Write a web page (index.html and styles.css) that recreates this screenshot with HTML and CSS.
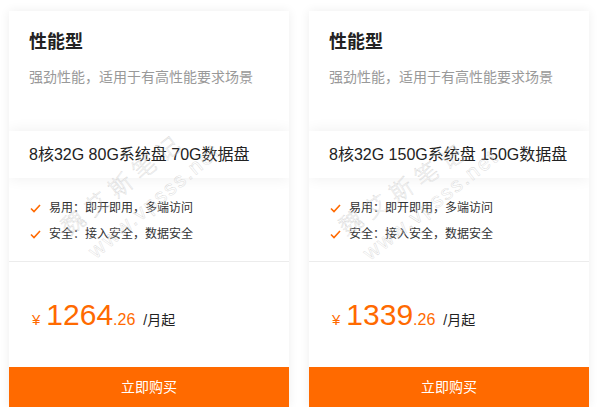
FILE: index.html
```html
<!DOCTYPE html>
<html lang="zh-CN">
<head>
<meta charset="utf-8">
<title>性能型</title>
<link rel="stylesheet" href="styles.css">
</head>
<body>
<div class="plans">
  <div class="card">
    <div class="head">
      <h3 class="title">性能型</h3>
      <p class="desc">强劲性能，适用于有高性能要求场景</p>
    </div>
    <div class="spec">8核32G 80G系统盘 70G数据盘</div>
    <ul class="features">
      <li><svg class="check" viewBox="0 0 11 9"><polyline points="1,4.5 4,7.5 10,1" /></svg>易用：即开即用，多端访问</li>
      <li><svg class="check" viewBox="0 0 11 9"><polyline points="1,4.5 4,7.5 10,1" /></svg>安全：接入安全，数据安全</li>
    </ul>
    <div class="price"><span class="yen">¥</span><span class="int">1264</span><span class="dec">.26</span><span class="unit">/月起</span></div>
    <a class="buy">立即购买</a>
    <div class="wm wm1"><span class="wm-cn">魏艾斯笔记</span><span class="wm-en">www.vpsss.net</span></div>
  </div>
  <div class="card">
    <div class="head">
      <h3 class="title">性能型</h3>
      <p class="desc">强劲性能，适用于有高性能要求场景</p>
    </div>
    <div class="spec">8核32G 150G系统盘 150G数据盘</div>
    <ul class="features">
      <li><svg class="check" viewBox="0 0 11 9"><polyline points="1,4.5 4,7.5 10,1" /></svg>易用：即开即用，多端访问</li>
      <li><svg class="check" viewBox="0 0 11 9"><polyline points="1,4.5 4,7.5 10,1" /></svg>安全：接入安全，数据安全</li>
    </ul>
    <div class="price"><span class="yen">¥</span><span class="int">1339</span><span class="dec">.26</span><span class="unit">/月起</span></div>
    <a class="buy">立即购买</a>
    <div class="wm wm2"><span class="wm-cn">魏艾斯笔记</span><span class="wm-en">www.vpsss.net</span></div>
  </div>
</div>
</body>
</html>
```

FILE: styles.css
```css
* { box-sizing: border-box; }
html, body {
  margin: 0;
  padding: 0;
  background: #fff;
}
body {
  font-family: "Liberation Sans", "Noto Sans CJK SC", sans-serif;
  color: #333;
}
.plans {
  display: flex;
  gap: 20px;
  padding: 11px 9px 0;
}
.card {
  position: relative;
  width: 280px;
  height: 396px;
  background: #fff;
  box-shadow: 0 0 10px rgba(0, 0, 0, 0.07);
  display: flex;
  flex-direction: column;
  overflow: hidden;
}
.head {
  padding: 19px 20px 0;
  height: 120px;
}
.title {
  margin: 0;
  font-size: 18px;
  line-height: 24px;
  font-weight: bold;
  color: #222;
}
.desc {
  margin: 13px 0 0;
  font-size: 14px;
  line-height: 20px;
  color: #999;
}
.spec {
  height: 47px;
  line-height: 47px;
  padding-left: 20px;
  font-size: 16px;
  color: #222;
  background: #fff;
  box-shadow: 0 0 14px rgba(0, 0, 0, 0.07);
  position: relative;
  z-index: 1;
}
.features {
  list-style: none;
  margin: 0;
  padding: 17px 20px 14px 21px;
  border-bottom: 1px solid #ececec;
}
.features li {
  display: flex;
  align-items: center;
  font-size: 12px;
  line-height: 26px;
  color: #333;
}
.check {
  width: 11px;
  height: 9px;
  margin-right: 8px;
  fill: none;
  stroke: #ff6a00;
  stroke-width: 1.6;
}
.price {
  flex: 1;
  display: flex;
  align-items: baseline;
  padding: 38px 23px 0;
  color: #ff6a00;
}
.yen {
  font-size: 15px;
  margin-right: 6px;
}
.int {
  font-size: 30px;
  line-height: 30px;
}
.dec {
  font-size: 16px;
}
.unit {
  font-size: 14px;
  color: #222;
  margin-left: 8px;
}
.buy {
  display: block;
  height: 40px;
  line-height: 40px;
  background: #ff6a00;
  color: #fff;
  text-align: center;
  font-size: 14px;
}
.wm {
  position: absolute;
  inset: 0;
  pointer-events: none;
  z-index: 2;
}
.wm-cn,
.wm-en {
  position: absolute;
  white-space: nowrap;
  transform-origin: 0 100%;
  color: rgba(255, 255, 255, 0);
  -webkit-text-stroke: 0.35px #cfcfcf;
  font-weight: 300;
}
.wm-cn {
  font-size: 23px;
  letter-spacing: 7px;
  line-height: 28px;
  left: 64px;
  top: 202px;
  transform: rotate(-38deg);
}
.wm-en {
  font-size: 21px;
  letter-spacing: 2px;
  line-height: 24px;
  left: 90px;
  top: 228px;
  transform: rotate(-40deg);
}
.wm2 .wm-cn {
  left: 40px;
  top: 202px;
  transform: rotate(-33deg);
}
.wm2 .wm-en {
  left: 64px;
  top: 230px;
  transform: rotate(-38deg);
}
```
